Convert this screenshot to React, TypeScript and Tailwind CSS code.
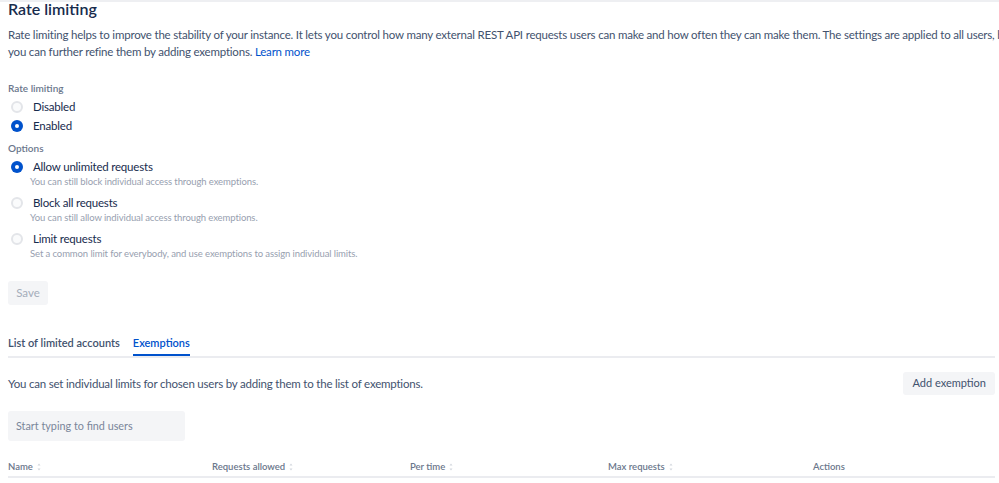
import React from 'react';

const font = { fontFamily: 'Lato, "Open Sans", sans-serif' };

function Radio({ checked }: { checked?: boolean }) {
    return checked ? (
        <span className="w-[12px] h-[12px] rounded-full bg-[#0052cc] flex items-center justify-center shrink-0">
            <span className="w-[4px] h-[4px] rounded-full bg-white" />
        </span>
    ) : (
        <span className="w-[12px] h-[12px] rounded-full bg-[#fafbfc] border-2 border-[#e3e5e9] shrink-0" />
    );
}

function SortIcon() {
    return (
        <svg width="4" height="8" viewBox="0 0 4 8" className="ml-[4px] inline-block">
            <path d="M2 0.5 L3.5 2.5 H0.5 Z M2 7.5 L3.5 5.5 H0.5 Z" fill="#d3d7de" />
        </svg>
    );
}

const options = [
    { label: 'Allow unlimited requests', hint: 'You can still block individual access through exemptions.', checked: true },
    { label: 'Block all requests', hint: 'You can still allow individual access through exemptions.' },
    { label: 'Limit requests', hint: 'Set a common limit for everybody, and use exemptions to assign individual limits.' },
];

const columns = ['Name', 'Requests allowed', 'Per time', 'Max requests', 'Actions'];

export default function App() {
    return (
        <div className="w-[999px] h-[483px] overflow-hidden bg-white border-t-2 border-[#eeeff2] text-[#172b4d]" style={font}>
            <div className="pl-[8px] w-[1060px]">
                <h1 className="-mt-[2px] text-[16px] leading-[18px] font-semibold text-[#172b4d]">Rate limiting</h1>
                <p className="mt-[8px] w-[1020px] text-[11.5px] tracking-[-0.2px] leading-[17px] text-[#42526e]">
                    Rate limiting helps to improve the stability of your instance. It lets you control how many external REST API requests users can make and how often they can make them. The settings are applied to all users, but you can further refine them by adding exemptions.{' '}
                    <span className="text-[#0052cc]">Learn more</span>
                </p>

                <div className="mt-[21px] text-[10px] leading-[14px] font-semibold text-[#6b778c]">Rate limiting</div>
                <div className="mt-[2px] flex flex-col">
                    <label className="flex items-center gap-[10px] h-[19px] pl-[3px] text-[11.5px] tracking-[-0.2px] text-[#172b4d]">
                        <Radio /> Disabled
                    </label>
                    <label className="flex items-center gap-[10px] h-[19px] pl-[3px] text-[11.5px] tracking-[-0.2px] text-[#172b4d]">
                        <Radio checked /> Enabled
                    </label>
                </div>

                <div className="mt-[6px] text-[10px] leading-[14px] font-semibold text-[#6b778c]">Options</div>
                <div className="mt-[3px] flex flex-col gap-[5px]">
                    {options.map((o) => (
                        <div key={o.label} className="flex flex-col">
                            <label className="flex items-center gap-[10px] h-[17px] pl-[3px] text-[11.5px] tracking-[-0.2px] text-[#172b4d]">
                                <Radio checked={o.checked} /> {o.label}
                            </label>
                            <div className="pl-[22px] text-[9.5px] tracking-[-0.1px] leading-[14px] text-[#97a0af]">{o.hint}</div>
                        </div>
                    ))}
                </div>

                <button className="mt-[20px] h-[24px] w-[40px] rounded-[3px] bg-[#f4f5f7] text-[11.5px] text-[#a5adba]">Save</button>
            </div>

            <div className="pl-[8px] pr-[4px]">
                <div className="mt-[27px] flex gap-[13px] border-b-2 border-[#ebecf0] text-[11px] font-semibold">
                    <div className="h-[24px] text-[#42526e] leading-[22px]">List of limited accounts</div>
                    <div className="h-[24px] text-[#0052cc] leading-[22px] border-b-2 border-[#0052cc] -mb-[2px]">Exemptions</div>
                </div>

                <div className="mt-[14px] flex items-center justify-between">
                    <span className="text-[11.5px] tracking-[-0.2px] text-[#42526e]">You can set individual limits for chosen users by adding them to the list of exemptions.</span>
                    <button className="h-[23px] px-[9px] rounded-[3px] bg-[#f4f5f7] text-[11px] text-[#42526e]">Add exemption</button>
                </div>

                <div className="mt-[16px] w-[177px] h-[30px] rounded-[3px] bg-[#f4f5f7] flex items-center pl-[8px] text-[10.8px] text-[#7a869a]">
                    Start typing to find users
                </div>

                <div className="mt-[19px] grid grid-cols-[204px_198px_198px_205px_1fr] border-b-2 border-[#ebecf0] text-[9.5px] font-semibold text-[#6b778c] h-[18px] leading-[14px]">
                    {columns.map((c) => (
                        <div key={c} className="flex items-center h-[14px]">
                            {c}
                            {c !== 'Actions' && <SortIcon />}
                        </div>
                    ))}
                </div>
            </div>
        </div>
    );
}
